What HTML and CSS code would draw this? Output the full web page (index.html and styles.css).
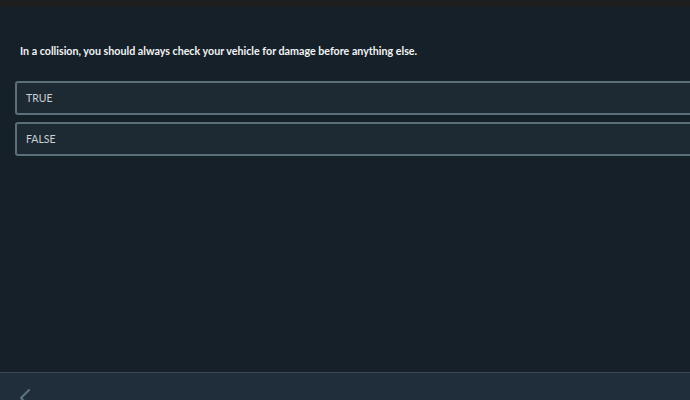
FILE: index.html
```html
<!DOCTYPE html>
<html lang="en">
<head>
  <meta charset="UTF-8">
  <meta name="viewport" content="width=device-width, initial-scale=1.0">
  <link rel="stylesheet" href="styles.css">
  <title>Quiz</title>
</head>
<body>

  <div class="topbar"></div>

  <main class="quiz">
    <p class="question">In a collision, you should always check your vehicle for damage before anything else.</p>

    <div class="answers">
      <button class="answer">TRUE</button>
      <button class="answer">FALSE</button>
    </div>
  </main>

  <footer class="footer">
    <button class="back" aria-label="Back">
      <svg width="14" height="20" viewBox="0 0 14 20">
        <path d="M11 2 L3 10 L11 18" fill="none" stroke="#5d7480" stroke-width="2" stroke-linecap="round" stroke-linejoin="round"/>
      </svg>
    </button>
  </footer>

</body>
</html>
```

FILE: styles.css
```css
html, body {
  height: 100%;
}

body {
  margin: 0;
  font-family: Lato, "Noto Sans", sans-serif;
  background-color: #162028;
  color: #fff;
  display: flex;
  flex-direction: column;
  overflow: hidden;
}

.topbar {
  height: 7px;
  background-color: #1e1d1f;
}

.quiz {
  flex: 1;
  padding: 37px 0 0 15px;
}

.question {
  margin: 0 0 24px 5px;
  font-size: 10.7px;
  font-weight: 700;
  color: #f2f4f5;
}

.answers {
  display: flex;
  flex-direction: column;
  gap: 7px;
  margin-right: -10px;
}

.answer {
  display: block;
  width: 100%;
  height: 34px;
  padding: 0 0 0 9px;
  text-align: left;
  font-family: inherit;
  font-size: 10.5px;
  color: #c9d1d5;
  background-color: #1e2a33;
  border: 2px solid #5b6f79;
  border-radius: 3px;
  cursor: pointer;
}

.footer {
  height: 28px;
  border-top: 1px solid #3a4a55;
  background-color: #1f2e3a;
  padding: 15px 0 0 18px;
  box-sizing: border-box;
  flex-shrink: 0;
}

.back {
  background: none;
  border: none;
  padding: 0;
  cursor: pointer;
}
```
